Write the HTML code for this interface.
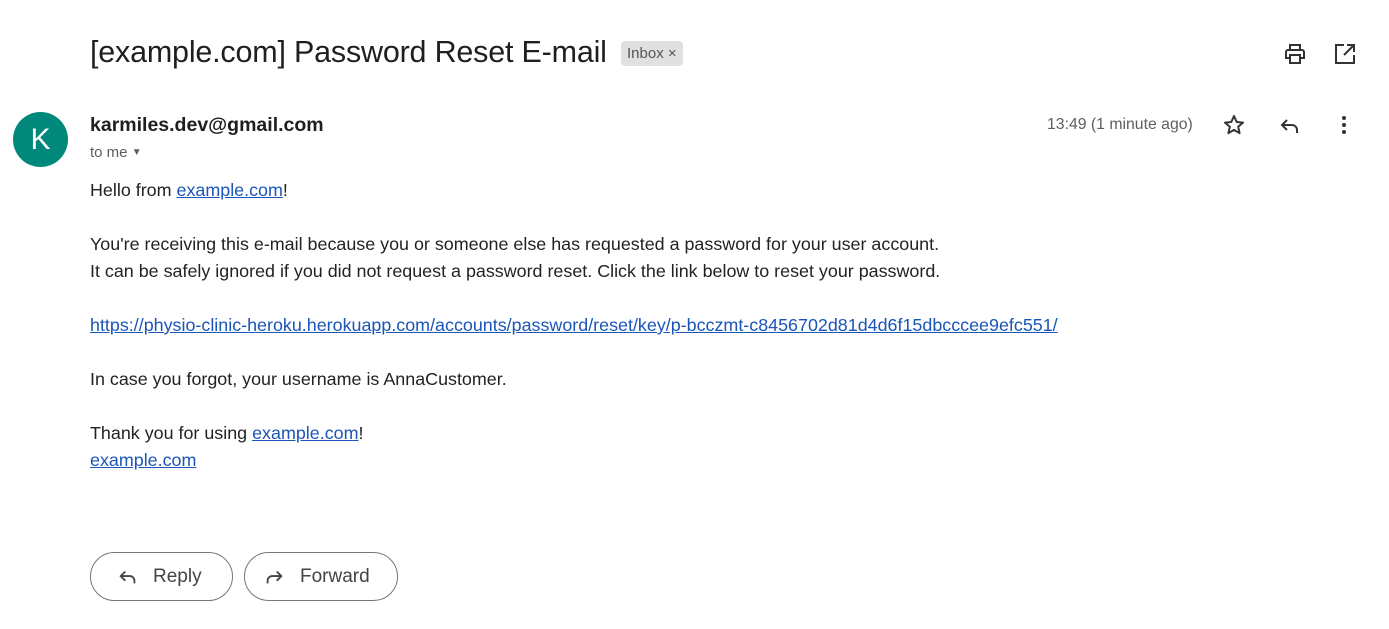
<!DOCTYPE html>
<html><head><meta charset="utf-8"><style>
*{margin:0;padding:0;box-sizing:border-box}
body{width:1389px;height:629px;background:#fff;font-family:"Liberation Sans",Arial,sans-serif;color:#222;position:relative;overflow:hidden}
.abs{position:absolute}
.title{left:90px;top:35px;font-size:30.5px;color:#1f1f1f;white-space:nowrap;letter-spacing:-0.2px}
.chip{left:621px;top:41px;height:25px;background:#e0e0e0;border-radius:4px;font-size:15px;color:#555;padding:2px 6px;line-height:21px}
.avatar{left:13px;top:112px;width:55px;height:55px;border-radius:50%;background:#00897b;color:#fff;font-size:30px;text-align:center;line-height:55px}
.from{left:90px;top:114px;font-size:19.5px;font-weight:bold;color:#1f1f1f}
.tome{left:90px;top:144px;font-size:15px;color:#5e5e5e}
.time{left:1047px;top:116px;font-size:15.8px;color:#5e5e5e}
.body{left:90px;top:177px;font-size:17.9px;line-height:27px;color:#222;white-space:nowrap}
.body a{color:#1a55b8;text-decoration:underline}
.btn{top:552px;height:49px;border:1px solid #747775;border-radius:25px;font-size:19px;color:#444;line-height:47px}
svg{position:absolute}
</style></head><body>
<div class="abs title">[example.com] Password Reset E-mail</div>
<div class="abs chip">Inbox ×</div>
<svg style="left:1283px;top:42px" width="24" height="24" viewBox="0 0 24 24"><path d="M7 8V3h10v5M5 8h14a2 2 0 0 1 2 2v6h-4M7 16H3v-6a2 2 0 0 1 2-2M7 13h10v8H7z" fill="none" stroke="#333" stroke-width="2"/></svg>
<svg style="left:1333px;top:42px" width="24" height="24" viewBox="0 0 24 24"><path d="M11 3H3v18h18v-8M14 3h7v7M21 3L11 13" fill="none" stroke="#333" stroke-width="2"/></svg>
<div class="abs avatar">K</div>
<div class="abs from">karmiles.dev@gmail.com</div>
<div class="abs tome">to me <span style="font-size:10px;vertical-align:2px">&#9660;</span></div>
<div class="abs time">13:49 (1 minute ago)</div>
<svg style="left:1222px;top:113px" width="24" height="24" viewBox="0 0 24 24"><path d="M12 3l2.7 6 6.3.6-4.8 4.2 1.4 6.4L12 16.9 6.4 20.2l1.4-6.4L3 9.6 9.3 9z" fill="none" stroke="#333" stroke-width="2" stroke-linejoin="round"/></svg>
<svg style="left:1278px;top:114px" width="24" height="24" viewBox="0 0 24 24"><path d="M9 6L4 11l5 5M4 11h10a5 5 0 0 1 5 5v3" fill="none" stroke="#333" stroke-width="2"/></svg>
<svg style="left:1332px;top:113px" width="24" height="24" viewBox="0 0 24 24"><circle cx="12" cy="5" r="2" fill="#333"/><circle cx="12" cy="12" r="2" fill="#333"/><circle cx="12" cy="19" r="2" fill="#333"/></svg>
<div class="abs body">
Hello from <a>example.com</a>!<br><br>
You're receiving this e-mail because you or someone else has requested a password for your user account.<br>
It can be safely ignored if you did not request a password reset. Click the link below to reset your password.<br><br>
<a>https://physio-clinic-heroku.herokuapp.com/accounts/password/reset/key/p-bcczmt-c8456702d81d4d6f15dbcccee9efc551/</a><br><br>
In case you forgot, your username is AnnaCustomer.<br><br>
Thank you for using <a>example.com</a>!<br>
<a>example.com</a>
</div>
<div class="abs btn" style="left:90px;width:143px;padding-left:62px">Reply</div>
<svg style="left:117px;top:566px" width="22" height="22" viewBox="0 0 24 24"><path d="M9 6L4 11l5 5M4 11h10a5 5 0 0 1 5 5v3" fill="none" stroke="#444" stroke-width="2"/></svg>
<div class="abs btn" style="left:244px;width:154px;padding-left:55px">Forward</div>
<svg style="left:263px;top:566px" width="22" height="22" viewBox="0 0 24 24"><path d="M15 6l5 5-5 5M20 11H10a5 5 0 0 0-5 5v3" fill="none" stroke="#444" stroke-width="2"/></svg>
</body></html>
